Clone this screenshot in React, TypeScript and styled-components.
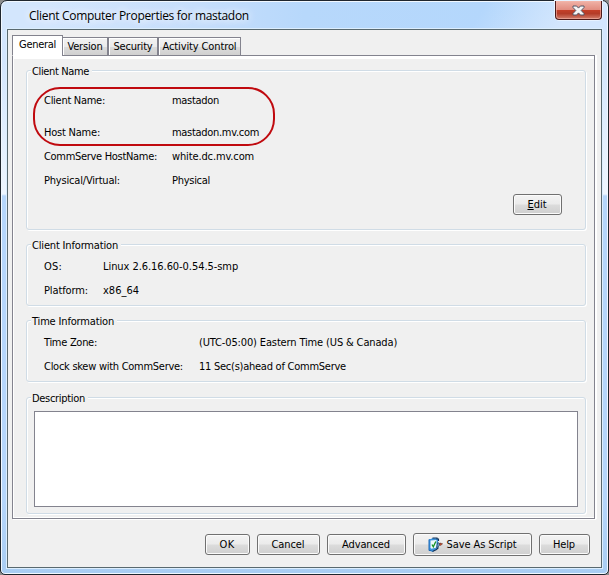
import React from 'react';
import styled, { createGlobalStyle } from 'styled-components';

const GlobalStyle = createGlobalStyle`
  * { box-sizing: border-box; }
  html, body { margin: 0; background: #8d8d8d; overflow: hidden; }
  body { font: 11px/14px "DejaVu Sans Condensed", "Liberation Sans", sans-serif; color: #000; }
`;

const Window = styled.div`
  display: flex;
  flex-direction: column;
  width: 609px;
  height: 575px;
  padding: 1px 6px 6px;
  border: 1px solid #1f262e;
  border-radius: 7px 7px 5px 5px;
  background:
    linear-gradient(120deg, #d3e6fd00 78%, #d3e6fd 92%) 0 0 / 100% 28px no-repeat,
    linear-gradient(90deg, #d3e6fd, #d3e6fd 8%, #c6defb 32%, #b7d8fb 50%, #b4d7fc 80%, #b9dafc) 0 0 / 100% 28px no-repeat,
    linear-gradient(#d3e6fd 0, #d3e6fd 60px, #eef6ff 193px, #b5d6fb 195px, #b5d6fb 500px, #a9cdf3);
  box-shadow: inset 0 0 0 1px #f1f8ff;
`;

const TitleBar = styled.header`
  display: flex;
  justify-content: space-between;
  flex: none;
  height: 27px;
`;

const Title = styled.h1`
  margin: 5px 0 0 22px;
  padding: 0 8px 0 0;
  height: 18px;
  font: 12px/18px "Open Sans", sans-serif;
  letter-spacing: -0.3px;
  white-space: nowrap;
  text-shadow: 0 0 8px #fff, 0 0 10px #f4f9ff;
`;

const CloseButton = styled.button`
  display: flex;
  align-items: center;
  justify-content: center;
  width: 47px;
  height: 19px;
  margin: -1px 0 0;
  padding: 0;
  border: 1px solid #4c1a1a;
  border-top: 0;
  border-radius: 0 0 4px 4px;
  background: linear-gradient(#f0b3a8, #e28d80 48%, #c33f28 52%, #b43c28 70%, #d27e6c);
  box-shadow: inset 0 0 0 1px #f3b6aa99, 0 0 0 1px #e7f2ff;
`;

const Client = styled.main`
  flex: 1;
  display: flex;
  flex-direction: column;
  min-height: 0;
  padding: 5px 6px 12px 4px;
  border: 1px solid #59696f;
  background: #f0f0f0;
  box-shadow: 0 0 0 1px #dceefe;
`;

const TabStrip = styled.nav`
  display: flex;
  align-items: flex-end;
  height: 21px;
  margin-bottom: -1px;
  z-index: 1;
`;

const Tab = styled.button<{ $width: number; $track: number; $selected?: boolean }>`
  flex: none;
  width: ${p => p.$width}px;
  height: ${p => (p.$selected ? 21 : 19)}px;
  margin-right: ${p => (p.$selected ? -1 : 0)}px;
  padding: ${p => (p.$selected ? '0 0 1px' : '1px 0 0')};
  border: 1px solid #83838e;
  border-bottom-color: ${p => (p.$selected ? '#fff' : '#83838e')};
  background: ${p => (p.$selected ? '#fff' : 'linear-gradient(#f2f2f2, #ebebeb 50%, #dcdcdc 52%, #d0d0d0)')};
  box-shadow: inset 1px 1px 0 #fff;
  font: inherit;
  color: inherit;
  letter-spacing: ${p => p.$track}px;
  white-space: nowrap;
`;

const Pane = styled.section`
  flex: none;
  display: flex;
  flex-direction: column;
  height: 464px;
  padding: 8px 8px 0 13px;
  border: 1px solid #83838e;
  box-shadow: inset 1px 3px 0 #fff, inset 0 -1px 0 #fff, 1px 1px 0 #fff, 2px 0 0 #fff;
`;

const Group = styled.fieldset<{ $height: number; $gap: number; $top: number }>`
  flex: none;
  display: flex;
  flex-direction: column;
  min-width: 0;
  height: ${p => p.$height}px;
  margin: 0 0 ${p => p.$gap}px;
  padding: ${p => p.$top}px 6px 0 17px;
  border: 1px solid #d0dce6;
  border-radius: 3px;
  box-shadow: inset 1px 1px 0 #fff, 1px 1px 0 #fff;
`;

const Legend = styled.legend<{ $track: number }>`
  height: 13px;
  margin-left: -13px;
  padding: 0 3px 0 1px;
  background: #f0f0f0;
  line-height: 16px;
  letter-spacing: ${p => p.$track}px;
  white-space: nowrap;
`;

const Field = styled.div<{ $label: number; $after?: number }>`
  display: grid;
  grid-template-columns: ${p => p.$label}px 1fr;
  height: 14px;
  margin-bottom: ${p => p.$after ?? 10}px;
  white-space: nowrap;
`;

const Text = styled.span<{ $track: number }>`
  letter-spacing: ${p => p.$track}px;
`;

const Highlight = styled.div`
  position: absolute;
  left: 33px;
  top: 87px;
  width: 242px;
  height: 59px;
  border: 2px solid #c00a0f;
  border-radius: 27px;
`;

const Button = styled.button<{ $width: number; $track: number; $tall?: boolean }>`
  flex: none;
  display: flex;
  align-items: center;
  justify-content: center;
  gap: 4px;
  width: ${p => p.$width}px;
  height: ${p => (p.$tall ? 23 : 21)}px;
  padding: 0 1px 0 0;
  border: 1px solid #707070;
  border-radius: 3px;
  background: linear-gradient(#f3f3f3, #ebebeb 48%, #dcdcdc 52%, #cfcfcf);
  box-shadow: inset 0 0 0 1px #fbfbfb;
  font: inherit;
  color: inherit;
  letter-spacing: ${p => p.$track}px;
  white-space: nowrap;
`;

const EditRow = styled.div`
  display: flex;
  justify-content: flex-end;
  margin: -4px 17px 0 0;
`;

const Accel = styled.u`
  text-underline-offset: 1px;
`;

const Notes = styled.textarea`
  display: block;
  width: 544px;
  height: 96px;
  margin: 0 0 0 -10px;
  padding: 2px;
  border: 1px solid #83838e;
  background: #fff;
  resize: none;
  outline: 0;
`;

const Footer = styled.footer`
  display: flex;
  align-items: center;
  justify-content: flex-end;
  gap: 7px;
  height: 23px;
  margin-top: 14px;
  padding-right: 5px;
`;

const CloseIcon = () => (
  <svg width="13" height="11" viewBox="0 0 13 11">
    <path
      d="M1 1h3.6l1.9 2.1L8.400 1H12v1.500L9.200 5.500 12 8.500V10H8.400L6.500 7.900 4.600 10H1V8.500l2.800-3L1 2.500z"
      fill="#f6f6f6"
      stroke="#535666"
    />
  </svg>
);

const ScriptIcon = () => (
  <svg width="15" height="16" viewBox="0 0 15 16">
    <path d="M1 2h2L4.500 1 10 1.500v9.500L4.500 15 1 13.500z" fill="#3d93dc" />
    <path d="M1 2.500v11h2.500" fill="none" stroke="#1b68b8" />
    <path d="M2.500 3.500L8.500 3v7.500l-5 1.200-1-.7z" fill="#eefafc" />
    <path d="M4.500 1H9v1h1.500v2M4.500 14.500l4-2 2-2" fill="none" stroke="#123055" strokeWidth="1.100" />
    <path d="M4 7.500l1.300 2.300L7.800 4.500" fill="none" stroke="#159326" strokeWidth="1.300" />
    <path d="M8.500 10.500l1.300-5 2.700 1.500-2.500 3z" fill="#6da3cd" stroke="#1c3c60" strokeWidth=".7" />
    <path d="M12 6l2.600.800-2 1.600-1.200-.8z" fill="#c84b2f" stroke="#552618" strokeWidth=".5" />
  </svg>
);

export default function App() {
  return (
    <>
      <GlobalStyle />
      <Window>
        <TitleBar>
          <Title>Client Computer Properties for mastadon</Title>
          <CloseButton aria-label="Close"><CloseIcon /></CloseButton>
        </TitleBar>
        <Client>
          <TabStrip>
            <Tab $width={51} $track={-0.29} $selected>General</Tab>
            <Tab $width={46} $track={-0.19}>Version</Tab>
            <Tab $width={50} $track={-0.2}>Security</Tab>
            <Tab $width={83} $track={-0.12}>Activity Control</Tab>
          </TabStrip>
          <Pane>
            <Group $height={166} $gap={8} $top={17}>
              <Legend $track={-0.36}>Client Name</Legend>
              <Field $label={128} $after={18}>
                <Text $track={-0.28}>Client Name:</Text><Text $track={-0.3}>mastadon</Text>
              </Field>
              <Field $label={128}>
                <Text $track={-0.22}>Host Name:</Text><Text $track={-0.3}>mastadon.mv.com</Text>
              </Field>
              <Field $label={128}>
                <Text $track={-0.31}>CommServe HostName:</Text><Text $track={-0.13}>white.dc.mv.com</Text>
              </Field>
              <Field $label={128}>
                <Text $track={-0.19}>Physical/Virtual:</Text><Text $track={-0.28}>Physical</Text>
              </Field>
              <EditRow>
                <Button $width={49} $track={-0.04}><span><Accel>E</Accel>dit</span></Button>
              </EditRow>
            </Group>
            <Group $height={68} $gap={8} $top={9}>
              <Legend $track={-0.17}>Client Information</Legend>
              <Field $label={59}>
                <Text $track={0.2}>OS:</Text><Text $track={-0.06}>Linux 2.6.16.60-0.54.5-smp</Text>
              </Field>
              <Field $label={59}>
                <Text $track={-0.12}>Platform:</Text><Text $track={0}>x86_64</Text>
              </Field>
            </Group>
            <Group $height={68} $gap={9} $top={9}>
              <Legend $track={-0.16}>Time Information</Legend>
              <Field $label={155}>
                <Text $track={-0.29}>Time Zone:</Text>
                <Text $track={-0.14}>(UTC-05:00) Eastern Time (US &amp; Canada)</Text>
              </Field>
              <Field $label={155}>
                <Text $track={-0.27}>Clock skew with CommServe:</Text>
                <Text $track={-0.25}>11 Sec(s)ahead of CommServe</Text>
              </Field>
            </Group>
            <Group $height={123} $gap={0} $top={7}>
              <Legend $track={-0.31}>Description</Legend>
              <Notes aria-label="Description" />
            </Group>
          </Pane>
          <Footer>
            <Button $width={45} $track={0.3}>OK</Button>
            <Button $width={63} $track={-0.09}>Cancel</Button>
            <Button $width={79} $track={-0.11}>Advanced</Button>
            <Button $width={119} $track={-0.09} $tall><ScriptIcon />Save As Script</Button>
            <Button $width={51} $track={-0.14}>Help</Button>
          </Footer>
        </Client>
        <Highlight />
      </Window>
    </>
  );
}
